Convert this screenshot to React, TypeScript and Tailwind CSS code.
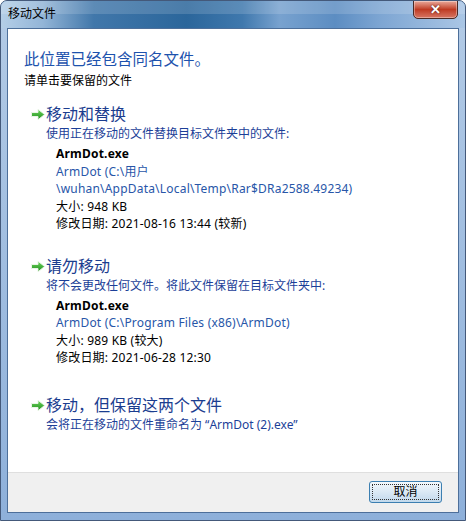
import React from "react";

const font = { fontFamily: '"Noto Sans", "Noto Sans CJK SC", sans-serif' };

function GreenArrow() {
  return (
    <svg width="16" height="13" viewBox="0 0 16 13" className="mt-[4px]">
      <defs>
        <linearGradient id="ga" x1="0" y1="0" x2="0" y2="1">
          <stop offset="0" stopColor="#6fd65e" />
          <stop offset="1" stopColor="#1f8d1c" />
        </linearGradient>
      </defs>
      <path
        d="M1.5 4.5 H8 V1.2 L14.6 6.5 L8 11.8 V8.5 H1.5 Z"
        fill="url(#ga)"
        stroke="#e9f5e6"
        strokeWidth="1"
        strokeLinejoin="round"
      />
    </svg>
  );
}

function Option({
  title,
  note,
  children,
  className,
}: {
  title: string;
  note: string;
  children?: React.ReactNode;
  className?: string;
}) {
  return (
    <div className={"flex " + (className ?? "")}>
      <div className="w-[22px] flex justify-start pl-[6px]">
        <GreenArrow />
      </div>
      <div className="flex flex-col">
        <div className="text-[16px] leading-[20px] text-[#1b3d8f]">{title}</div>
        <div className="text-[12px] leading-[17px] mt-[1px] text-[#1c3f98]">{note}</div>
        {children}
      </div>
    </div>
  );
}

function FileInfo({ lines }: { lines: React.ReactNode[] }) {
  return (
    <div className="ml-[10px] mt-[3px] text-[12px] leading-[17.5px] tracking-[0.2px]">
      <div className="font-bold text-black">ArmDot.exe</div>
      {lines}
    </div>
  );
}

export default function App() {
  return (
    <div
      className="w-[466px] h-[521px] flex flex-col rounded-t-[7px] border border-[#44597a] overflow-hidden bg-[#9fbde0] bg-linear-to-b from-[#b3cbe6] to-[#8eb0da]"
      style={font}
    >
      {/* title bar */}
      <div className="h-[27px] flex items-start relative bg-[#4a7fb2] bg-linear-[90deg,#b4cee7_0%,#93b5d7_9%,#4177aa_20%,#2b669b_40%,#3f78ad_52%,#78a2cf_60%,#5c8dc2_72%,#7ea6d3_82%,#aac6e5_100%]">
        <div className="absolute inset-x-0 top-0 h-[13px] bg-white/15" />
        <span className="relative text-[12px] leading-[16px] mt-[5px] ml-[7px] text-black">移动文件</span>
        <div className="ml-auto mr-[7px] relative w-[45px] h-[19px] -mt-[1px] rounded-b-[5px] border border-[#4a2a26] flex items-center justify-center shadow-[inset_0_0_0_1px_rgba(255,255,255,0.35)] bg-[#c9503b] bg-linear-to-b from-[#e9a99b] via-[#bf3a22] to-[#d77563]">
          <span className="text-white text-[13px] font-bold leading-none [text-shadow:0_0_2px_#401010]">✕</span>
        </div>
      </div>

      {/* client area */}
      <div className="flex-1 mx-[6px] mb-[7px] border border-[#4d6f9a] bg-white flex flex-col">
        <div className="flex-1 pl-[16px] pt-[20px] flex flex-col">
          <div className="text-[15.5px] leading-[20px] text-[#1d52ad]">此位置已经包含同名文件。</div>
          <div className="text-[12px] leading-[16px] mt-[4px] text-black">请单击要保留的文件</div>

          <Option className="mt-[15px]" title="移动和替换" note="使用正在移动的文件替换目标文件夹中的文件:">
            <FileInfo
              lines={[
                <div key="p" className="text-[#2856a8]">
                  ArmDot (C:\用户
                  <br />
                  \wuhan\AppData\Local\Temp\Rar$DRa2588.49234)
                </div>,
                <div key="s" className="text-black">大小: 948 KB</div>,
                <div key="d" className="text-black">修改日期: 2021-08-16 13:44 (较新)</div>,
              ]}
            />
          </Option>

          <Option className="mt-[23px]" title="请勿移动" note="将不会更改任何文件。将此文件保留在目标文件夹中:">
            <FileInfo
              lines={[
                <div key="p" className="text-[#2856a8]">ArmDot (C:\Program Files (x86)\ArmDot)</div>,
                <div key="s" className="text-black">大小: 989 KB (较大)</div>,
                <div key="d" className="text-black">修改日期: 2021-06-28 12:30</div>,
              ]}
            />
          </Option>

          <Option className="mt-[28px]" title="移动，但保留这两个文件" note="会将正在移动的文件重命名为 “ArmDot (2).exe”" />
        </div>

        {/* footer */}
        <div className="h-[40px] border-t border-[#dfdfdf] bg-[#f0f0f0] flex items-start justify-end pr-[16px] pt-[8px]">
          <div className="w-[73px] h-[22px] rounded-[3px] border border-[#3c7fb1] p-[2px] bg-[#dbe8f3] bg-linear-to-b from-[#f4f9fd] to-[#c2d9ec]">
            <div className="w-full h-full border border-dotted border-[#333] flex items-center justify-center text-[12px] leading-none text-black">
              取消
            </div>
          </div>
        </div>
      </div>
    </div>
  );
}
